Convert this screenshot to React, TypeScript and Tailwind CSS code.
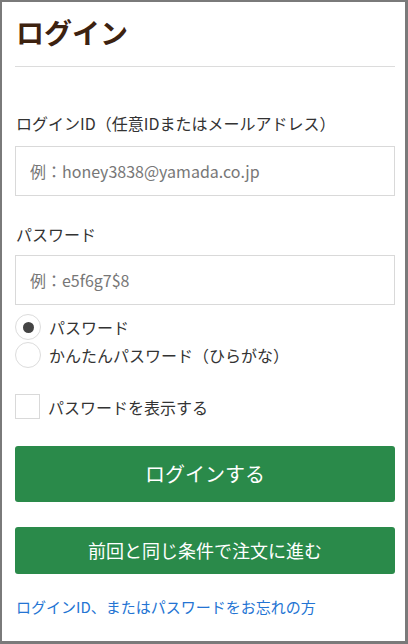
import { useState } from "react";

const font = { fontFamily: '"Noto Sans CJK JP", "Noto Sans", sans-serif' };

export default function App() {
    const [mode, setMode] = useState("password");
    const [show, setShow] = useState(false);

    return (
        <div
            style={font}
            className="w-[408px] h-[644px] bg-white border-[#7a7a7a] border-l-2 border-t-2 border-r-[3px] border-b-[3px] pl-[13px] pr-[10px] flex flex-col text-[#333]"
        >
            {/* title */}
            <div className="pt-[14px] pb-[18px] border-b border-[#dcdcdc]">
                <h1 className="text-[28px] leading-[32px] font-bold text-[#3d2210] pl-[1px]">ログイン</h1>
            </div>

            <label className="mt-[44px] text-[16px] leading-[24px] pl-[1px]">
                ログインID（任意IDまたはメールアドレス）
            </label>
            <input
                type="text"
                placeholder="例：honey3838@yamada.co.jp"
                className="mt-[11px] h-[50px] border border-[#d9d9d9] px-[14px] text-[16px] placeholder:text-[#777] outline-none"
                style={font}
            />

            <label className="mt-[26px] text-[16px] leading-[24px] pl-[1px]">パスワード</label>
            <input
                type="text"
                placeholder="例：e5f6g7$8"
                className="mt-[9px] h-[50px] border border-[#d9d9d9] px-[14px] text-[16px] placeholder:text-[#777] outline-none"
                style={font}
            />

            {/* password type */}
            <div className="mt-[9px] flex flex-col gap-[2px]">
                <RadioRow checked={mode === "password"} onClick={() => setMode("password")} label="パスワード" />
                <RadioRow checked={mode === "easy"} onClick={() => setMode("easy")} label="かんたんパスワード（ひらがな）" />
            </div>

            <button onClick={() => setShow(!show)} className="mt-[26px] flex items-center gap-[8px] text-left">
                <span className="w-[25px] h-[25px] border border-[#d9d9d9] flex items-center justify-center text-[#444] text-[16px]">
                    {show ? "✓" : ""}
                </span>
                <span className="text-[16px] leading-[24px]">パスワードを表示する</span>
            </button>

            <button className="mt-[27px] h-[56px] rounded-[3px] bg-[#2a8a4a] text-white text-[20px]">
                ログインする
            </button>
            <button className="mt-[25px] h-[47px] rounded-[3px] bg-[#2a8a4a] text-white text-[18px]">
                前回と同じ条件で注文に進む
            </button>

            <a href="#" className="mt-[23px] text-[15px] leading-[20px] text-[#2474d3] pl-[1px]">
                ログインID、またはパスワードをお忘れの方
            </a>
        </div>
    );
}

const RadioRow = ({ checked, label, onClick }: { checked: boolean; label: string; onClick: () => void }) => {
    return (
        <button onClick={onClick} className="flex items-center gap-[8px] text-left">
            <span className="w-[26px] h-[26px] rounded-full border border-[#dcdcdc] flex items-center justify-center">
                {checked && <span className="w-[11px] h-[11px] rounded-full bg-[#444]" />}
            </span>
            <span className="text-[16px] leading-[24px]">{label}</span>
        </button>
    );
};
